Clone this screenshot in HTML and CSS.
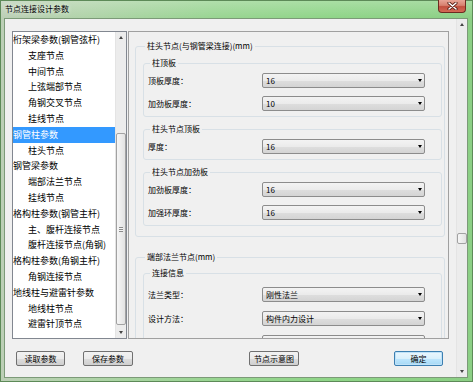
FILE: index.html
```html
<!DOCTYPE html>
<html lang="zh-CN">
<head>
    <meta charset="UTF-8">
    <title>节点连接设计参数</title>
    <link rel="stylesheet" href="styles.css">
</head>
<body>
    <div class="window">
        <!-- 标题栏 -->
        <div class="titlebar">
            <span class="title">节点连接设计参数</span>
            <button class="close-btn">
                <svg width="11" height="8" viewBox="0 0 11 8">
                    <path d="M2 1 L9 7 M9 1 L2 7" stroke="#5b2016" stroke-width="3.2" stroke-linecap="round"/>
                    <path d="M2 1 L9 7 M9 1 L2 7" stroke="#ffffff" stroke-width="1.5" stroke-linecap="round"/>
                </svg>
            </button>
        </div>

        <div class="client">
            <div class="content">
                <div class="main-row">
                    <!-- 左侧树形列表 -->
                    <div class="tree">
                        <ul class="tree-items">
                            <li class="tree-item">桁架梁参数(钢管弦杆)</li>
                            <li class="tree-item child">支座节点</li>
                            <li class="tree-item child">中间节点</li>
                            <li class="tree-item child">上弦端部节点</li>
                            <li class="tree-item child">角钢交叉节点</li>
                            <li class="tree-item child">挂线节点</li>
                            <li class="tree-item selected">钢管柱参数</li>
                            <li class="tree-item child">柱头节点</li>
                            <li class="tree-item">钢管梁参数</li>
                            <li class="tree-item child">端部法兰节点</li>
                            <li class="tree-item child">挂线节点</li>
                            <li class="tree-item">格构柱参数(钢管主杆)</li>
                            <li class="tree-item child">主、腹杆连接节点</li>
                            <li class="tree-item child">腹杆连接节点(角钢)</li>
                            <li class="tree-item">格构柱参数(角钢主杆)</li>
                            <li class="tree-item child">角钢连接节点</li>
                            <li class="tree-item">地线柱与避雷针参数</li>
                            <li class="tree-item child">地线柱节点</li>
                            <li class="tree-item child">避雷针顶节点</li>
                        </ul>
                        <div class="scrollbar tree-scroll">
                            <div class="scroll-arrow"><span class="tri-up"></span></div>
                            <div class="scroll-track">
                                <div class="scroll-thumb tree-thumb"><span class="grip"></span></div>
                            </div>
                            <div class="scroll-arrow"><span class="tri-down"></span></div>
                        </div>
                    </div>

                    <!-- 右侧参数面板 -->
                    <div class="param-panel">
                        <fieldset class="group">
                            <legend>柱头节点(与钢管梁连接)(mm)</legend>

                            <fieldset class="sub-group">
                                <legend>柱顶板</legend>
                                <div class="field-grid">
                                    <label class="field-label">顶板厚度：</label>
                                    <div class="combo"><span>16</span><span class="combo-arrow"></span></div>
                                    <label class="field-label">加劲板厚度：</label>
                                    <div class="combo"><span>10</span><span class="combo-arrow"></span></div>
                                </div>
                            </fieldset>

                            <fieldset class="sub-group">
                                <legend>柱头节点顶板</legend>
                                <div class="field-grid">
                                    <label class="field-label">厚度：</label>
                                    <div class="combo"><span>16</span><span class="combo-arrow"></span></div>
                                </div>
                            </fieldset>

                            <fieldset class="sub-group">
                                <legend>柱头节点加劲板</legend>
                                <div class="field-grid">
                                    <label class="field-label">加劲板厚度：</label>
                                    <div class="combo"><span>16</span><span class="combo-arrow"></span></div>
                                    <label class="field-label">加强环厚度：</label>
                                    <div class="combo"><span>16</span><span class="combo-arrow"></span></div>
                                </div>
                            </fieldset>
                        </fieldset>

                        <fieldset class="group flange">
                            <legend>端部法兰节点(mm)</legend>

                            <fieldset class="sub-group loose">
                                <legend>连接信息</legend>
                                <div class="field-grid">
                                    <label class="field-label">法兰类型：</label>
                                    <div class="combo"><span>刚性法兰</span><span class="combo-arrow"></span></div>
                                    <label class="field-label">设计方法：</label>
                                    <div class="combo"><span>构件内力设计</span><span class="combo-arrow"></span></div>
                                    <label class="field-label">&nbsp;</label>
                                    <div class="combo"><span></span><span class="combo-arrow"></span></div>
                                </div>
                            </fieldset>
                        </fieldset>
                    </div>
                </div>

                <!-- 底部按钮 -->
                <div class="button-row">
                    <button class="btn btn-read">读取参数</button>
                    <button class="btn btn-save">保存参数</button>
                    <button class="btn btn-sketch">节点示意图</button>
                    <button class="btn btn-ok">确定</button>
                </div>
            </div>

            <div class="scrollbar outer-scroll">
                <div class="scroll-arrow"><span class="tri-up"></span></div>
                <div class="scroll-track">
                    <div class="scroll-thumb outer-thumb"></div>
                </div>
                <div class="scroll-arrow"><span class="tri-down"></span></div>
            </div>
        </div>
    </div>
</body>
</html>
```

FILE: styles.css
```css
* {
    margin: 0;
    padding: 0;
    box-sizing: border-box;
}

body {
    width: 473px;
    height: 382px;
    overflow: hidden;
    font-family: "Noto Sans CJK SC", "Microsoft YaHei", sans-serif;
    color: #000;
    background: #8fcf88;
}

/* 窗口框架 */
.window {
    width: 473px;
    height: 382px;
    display: flex;
    flex-direction: column;
    padding: 0 5px 4px 4px;
    background:
        linear-gradient(180deg, rgba(255, 255, 255, 0.25) 0%, rgba(255, 255, 255, 0) 18px),
        linear-gradient(90deg, #bccfb6 0%, #b0d3a9 18%, #99d592 45%, #8fd588 70%, #8ccf85 100%);
    box-shadow: inset 0 0 0 1px #5d8a58;
}

.titlebar {
    height: 18px;
    display: flex;
    justify-content: space-between;
    align-items: flex-start;
}

.title {
    margin-top: 3px;
    padding-left: 1px;
    font-size: 8px;
    line-height: 12px;
    text-shadow: 0 0 4px rgba(255, 255, 255, 0.9);
}

.close-btn {
    width: 28px;
    height: 13px;
    margin-right: 2px;
    border: 1px solid #6e2a20;
    border-top: none;
    border-radius: 0 0 4px 4px;
    background: linear-gradient(180deg, #e7a596 0%, #d7816f 45%, #c2503e 55%, #d46a56 100%);
    display: flex;
    align-items: center;
    justify-content: center;
}

.client {
    flex: 1;
    display: flex;
    border: 1px solid #7c9a78;
    background: #f0f0f0;
}

.content {
    flex: 1;
    padding: 12px 0 0 7px;
}

.main-row {
    display: flex;
    gap: 1px;
    height: 308px;
}

/* 树形列表 */
.tree {
    width: 115px;
    display: flex;
    border: 1px solid #828790;
    background: #fff;
}

.tree-items {
    flex: 1;
    list-style: none;
    overflow: hidden;
}

.tree-item {
    height: 15.8px;
    line-height: 15.8px;
    font-size: 9px;
    white-space: nowrap;
}

.tree-item.child {
    padding-left: 15px;
}

.tree-item.selected {
    background: #3399ff;
    color: #fff;
}

/* 滚动条 */
.scrollbar {
    width: 11px;
    display: flex;
    flex-direction: column;
    background: #ececec;
    border-left: 1px solid #e4e4e4;
}

.scroll-arrow {
    height: 11px;
    display: flex;
    align-items: center;
    justify-content: center;
}

.tri-up {
    width: 0;
    height: 0;
    border-left: 2.5px solid transparent;
    border-right: 2.5px solid transparent;
    border-bottom: 3px solid #444;
}

.tri-down {
    width: 0;
    height: 0;
    border-left: 2.5px solid transparent;
    border-right: 2.5px solid transparent;
    border-top: 3px solid #444;
}

.scroll-track {
    flex: 1;
}

.scroll-thumb {
    width: 10px;
    border: 1px solid #a2a2a2;
    border-radius: 2px;
    background: linear-gradient(90deg, #f6f6f6, #e2e2e2);
    display: flex;
    align-items: center;
    justify-content: center;
}

.tree-thumb {
    margin-top: 90px;
    height: 192px;
}

.grip {
    width: 4px;
    height: 5px;
    border-top: 1px solid #8a8a8a;
    border-bottom: 1px solid #8a8a8a;
    background: linear-gradient(#f4f4f4 0 1px, #8a8a8a 1px 2px, #f4f4f4 2px);
}

.outer-thumb {
    margin-top: 203px;
    height: 11px;
}

/* 参数面板 */
.param-panel {
    width: 321px;
    height: 308px;
    border: 1px solid #a0a0a0;
    padding: 8px 3px 0 6px;
    overflow: hidden;
    background: #f0f0f0;
}

fieldset {
    border: 1px solid #d8e0e6;
    border-radius: 3px;
    min-width: 0;
}

legend {
    margin-left: 2px;
    padding: 0 2px;
    font-size: 8px;
    line-height: 12px;
}

.group {
    padding: 5px 2px 10px 7px;
}

.group.flange {
    margin-top: 14px;
    padding-top: 4px;
}

.sub-group {
    padding: 4px 0 5px 4px;
}

.sub-group + .sub-group {
    margin-top: 6px;
}

.sub-group.loose {
    padding-top: 8px;
}

.field-grid {
    display: grid;
    grid-template-columns: 114px 163px;
    row-gap: 8px;
    align-items: center;
}

.loose .field-grid {
    row-gap: 9px;
}

.field-label {
    font-size: 8px;
    line-height: 15px;
}

.combo {
    height: 15px;
    display: flex;
    justify-content: space-between;
    align-items: center;
    padding: 0 2px 0 3px;
    border: 1px solid #8c8c8c;
    border-radius: 2px;
    background: linear-gradient(180deg, #f3f3f3 0%, #ebebeb 50%, #dedede 51%, #d4d4d4 100%);
    font-size: 8px;
}

.combo-arrow {
    width: 0;
    height: 0;
    border-left: 2.5px solid transparent;
    border-right: 2.5px solid transparent;
    border-top: 3px solid #000;
}

/* 按钮 */
.button-row {
    display: flex;
    margin-top: 12px;
    padding-left: 4px;
}

.btn {
    height: 15px;
    width: 50px;
    border: 1px solid #707070;
    border-radius: 2px;
    background: linear-gradient(180deg, #f2f2f2 0%, #ebebeb 50%, #dddddd 51%, #cfcfcf 100%);
    font-family: inherit;
    font-size: 8px;
    color: #000;
}

.btn-read {
    width: 49px;
}

.btn-save {
    margin-left: 18px;
}

.btn-sketch {
    margin-left: 116px;
}

.btn-ok {
    width: 49px;
    margin-left: 95px;
    border-color: #3c7fb1;
    box-shadow: inset 0 0 0 1px #bfe2f8;
    background: linear-gradient(180deg, #eaf6fd 0%, #d9f0fc 50%, #bee6fd 51%, #a7d9f5 100%);
}
```
